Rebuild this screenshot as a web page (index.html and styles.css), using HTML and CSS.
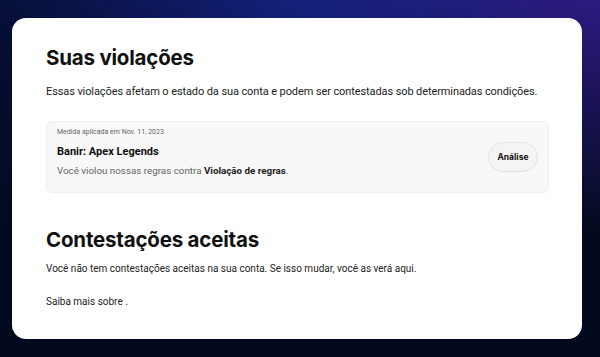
FILE: index.html
```html
<!DOCTYPE html>
<html lang="pt-BR">
<head>
  <meta charset="UTF-8" />
  <meta name="viewport" content="width=device-width, initial-scale=1.0"/>
  <title>Violações</title>
  <link rel="stylesheet" href="styles.css">
</head>
<body>
  <div class="card">
    <h2>Suas violações</h2>
    <p class="intro">Essas violações afetam o estado da sua conta e podem ser contestadas sob determinadas condições.</p>

    <div class="violation">
      <div class="info">
        <span class="date">Medida aplicada em Nov. 11, 2023</span>
        <h3>Banir: Apex Legends</h3>
        <p>Você violou nossas regras contra <b>Violação de regras</b>.</p>
      </div>
      <button type="button">Análise</button>
    </div>

    <h2 class="second">Contestações aceitas</h2>
    <p class="note">Você não tem contestações aceitas na sua conta. Se isso mudar, você as verá aqui.</p>
    <p class="more">Saiba mais sobre .</p>
  </div>
</body>
</html>
```

FILE: styles.css
```css
html, body {
  height: 100%;
}
body {
  margin: 0;
  font-family: Roboto, "Noto Sans", sans-serif;
  color: #111;
  background:
    linear-gradient(180deg, rgba(4,10,30,0) 0%, #040a1e 65%),
    linear-gradient(90deg, #060f38 0%, #13217d 50%, #2c1a80 100%);
  overflow: hidden;
}
.card {
  margin: 18px 18px 0 12px;
  height: 321px;
  box-sizing: border-box;
  background: white;
  border-radius: 14px;
  padding: 28px 33px 0 34px;
}
h2 {
  font-family: Inter, sans-serif;
  font-size: 20.5px;
  font-weight: 700;
  letter-spacing: -0.2px;
  margin: 0;
  line-height: 24px;
}
h2.second {
  margin-top: 35px;
}
.intro {
  font-size: 11px;
  letter-spacing: -0.1px;
  line-height: 16px;
  white-space: nowrap;
  margin: 14px 0 0;
  color: #222;
}
.violation {
  margin-top: 21px;
  height: 72px;
  box-sizing: border-box;
  background: #f8f8f8;
  border: 1px solid #eee;
  border-radius: 6px;
  padding: 0 10px;
  display: flex;
  align-items: center;
  justify-content: space-between;
}
.info {
  align-self: flex-start;
  padding-top: 5px;
}
.date {
  display: block;
  font-size: 7px;
  line-height: 10px;
  color: #666;
}
h3 {
  font-size: 11px;
  line-height: 14px;
  margin: 8px 0 0;
}
.info p {
  margin: 5px 0 0;
  font-size: 9.8px;
  line-height: 14px;
  color: #666;
}
.info p b {
  color: #222;
}
button {
  font-family: Inter, sans-serif;
  font-size: 8.5px;
  font-weight: 700;
  color: #111;
  background: #f4f4f4;
  border: 1px solid #e2e2e2;
  border-radius: 16px;
  width: 50px;
  height: 30px;
  padding: 0;
}
.note {
  font-size: 10px;
  line-height: 14px;
  margin: 10px 0 0;
  color: #222;
}
.more {
  font-size: 10px;
  line-height: 14px;
  margin: 19px 0 0;
  color: #222;
}
```
